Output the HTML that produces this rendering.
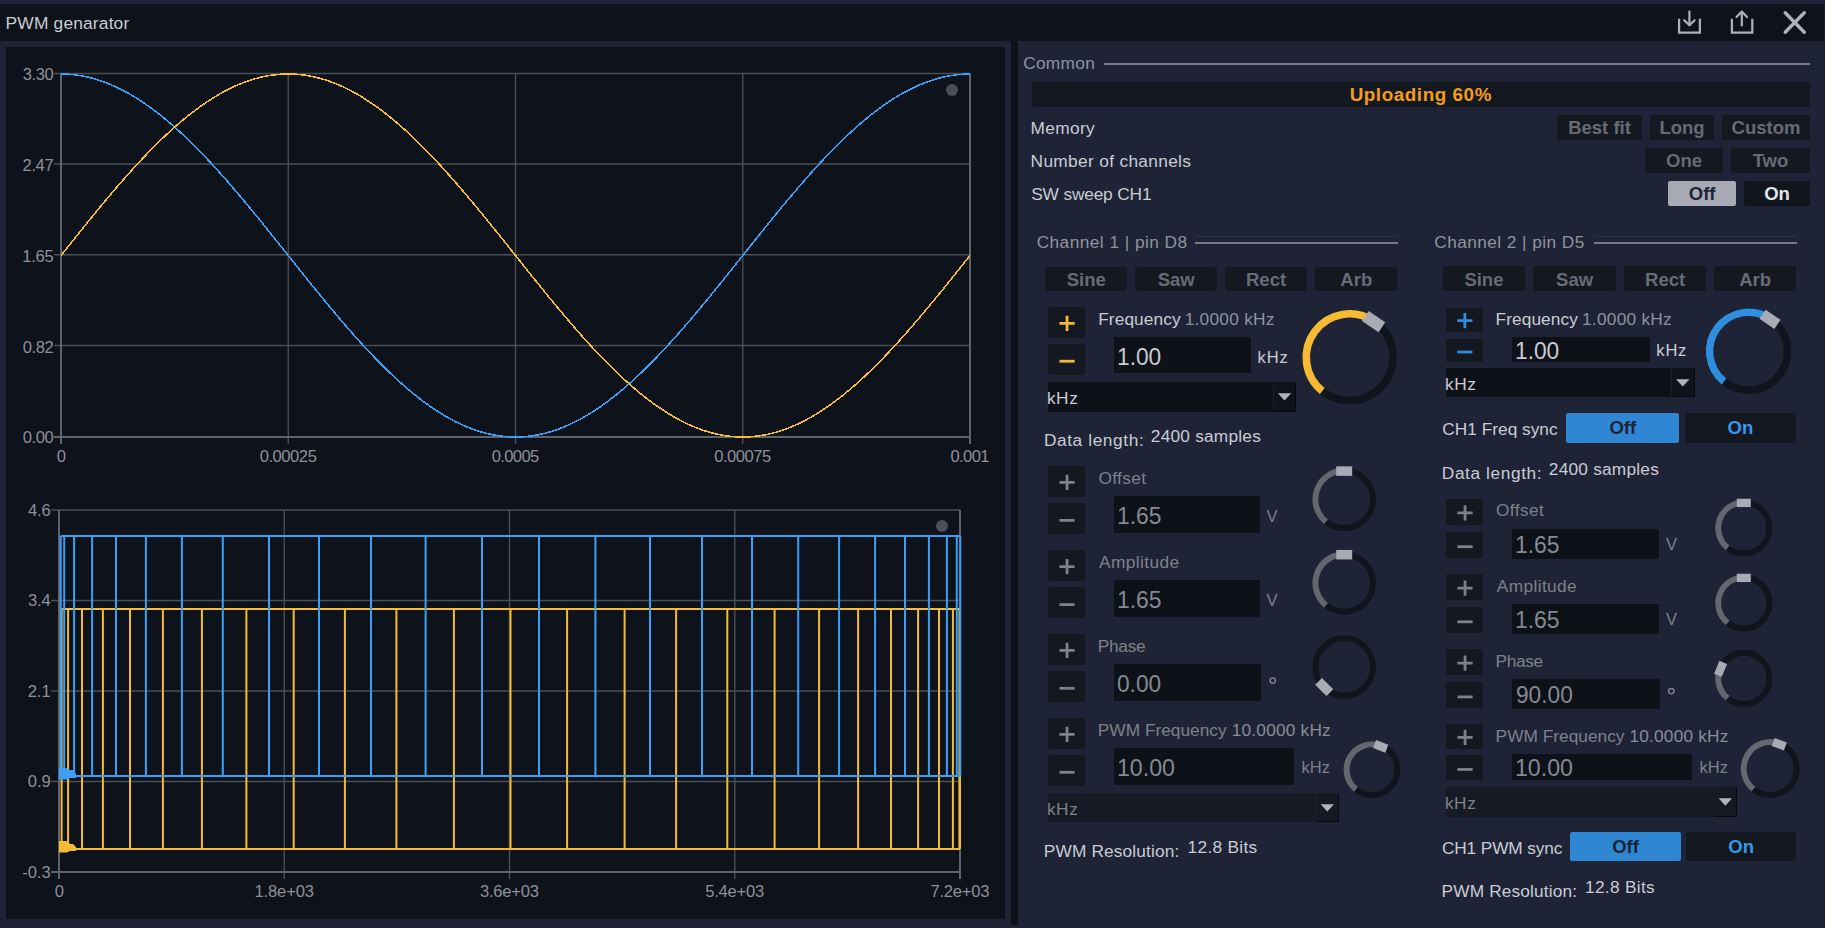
<!DOCTYPE html>
<html><head><meta charset="utf-8"><title>PWM genarator</title>
<style>
html,body{margin:0;padding:0;}
body{width:1825px;height:928px;overflow:hidden;position:relative;background:#1e2436;font-family:"Liberation Sans", sans-serif;}
</style></head><body>
<div style="position:absolute;left:0.00px;top:4.00px;width:1824.00px;height:37.00px;background:#0e121a;border-radius:0px;"></div><div style="position:absolute;left:6.00px;top:47.00px;width:999.00px;height:872.00px;background:#0e121a;border-radius:0px;"></div><div style="position:absolute;left:1011.00px;top:41.00px;width:7.00px;height:884.00px;background:#0e121a;border-radius:0px;"></div><div style="position:absolute;left:1104.00px;top:63.00px;width:706.00px;height:2.00px;background:#7a7d86;border-radius:0px;"></div><div style="position:absolute;left:1032.00px;top:82.30px;width:778.00px;height:24.40px;background:#141821;border-radius:2px;"></div><div style="position:absolute;left:1557.00px;top:115.00px;width:85.00px;height:24.50px;background:#131821;border-radius:2px;"></div><div style="position:absolute;left:1650.00px;top:115.00px;width:64.00px;height:24.50px;background:#131821;border-radius:2px;"></div><div style="position:absolute;left:1722.00px;top:115.00px;width:88.00px;height:24.50px;background:#131821;border-radius:2px;"></div><div style="position:absolute;left:1645.00px;top:148.00px;width:78.00px;height:24.60px;background:#131821;border-radius:2px;"></div><div style="position:absolute;left:1731.00px;top:148.00px;width:79.00px;height:24.60px;background:#131821;border-radius:2px;"></div><div style="position:absolute;left:1668.00px;top:180.80px;width:68.30px;height:24.90px;background:#a7aab4;border-radius:2px;"></div><div style="position:absolute;left:1744.00px;top:180.80px;width:66.00px;height:24.90px;background:#11151e;border-radius:2px;"></div><div style="position:absolute;left:1195.30px;top:242.00px;width:202.70px;height:2.00px;background:#777a83;border-radius:0px;"></div><div style="position:absolute;left:1195.30px;top:236.00px;width:202.70px;height:1.00px;background:#2b3241;border-radius:0px;"></div><div style="position:absolute;left:1045.20px;top:266.50px;width:82.20px;height:24.30px;background:#131821;border-radius:2px;"></div><div style="position:absolute;left:1135.00px;top:266.50px;width:82.30px;height:24.30px;background:#131821;border-radius:2px;"></div><div style="position:absolute;left:1225.00px;top:266.50px;width:82.10px;height:24.30px;background:#131821;border-radius:2px;"></div><div style="position:absolute;left:1315.20px;top:266.50px;width:82.20px;height:24.30px;background:#131821;border-radius:2px;"></div><div style="position:absolute;left:1048.00px;top:307.00px;width:37.30px;height:30.70px;background:#131821;border-radius:2px;"></div><div style="position:absolute;left:1048.00px;top:343.80px;width:37.30px;height:31.20px;background:#131821;border-radius:2px;"></div><div style="position:absolute;left:1113.80px;top:337.30px;width:137.00px;height:36.10px;background:#0d1118;border-radius:0px;"></div><div style="position:absolute;left:1048.00px;top:382.00px;width:248.00px;height:29.50px;background:#0d1118;border-radius:0px;"></div><div style="position:absolute;left:1273.00px;top:382.00px;width:23.00px;height:29.50px;background:#0f131b;border-radius:0px;box-shadow: inset -1px -1px 0 #07090d, inset 1px 0 0 #1a1f29;"></div><div style="position:absolute;left:1048.00px;top:466.10px;width:37.30px;height:30.70px;background:#131821;border-radius:2px;"></div><div style="position:absolute;left:1048.00px;top:503.20px;width:37.30px;height:30.80px;background:#131821;border-radius:2px;"></div><div style="position:absolute;left:1113.90px;top:496.00px;width:145.90px;height:36.80px;background:#0d1118;border-radius:0px;"></div><div style="position:absolute;left:1048.00px;top:550.30px;width:37.30px;height:30.70px;background:#131821;border-radius:2px;"></div><div style="position:absolute;left:1048.00px;top:587.40px;width:37.30px;height:30.80px;background:#131821;border-radius:2px;"></div><div style="position:absolute;left:1113.90px;top:580.20px;width:145.90px;height:36.80px;background:#0d1118;border-radius:0px;"></div><div style="position:absolute;left:1048.00px;top:634.00px;width:37.30px;height:30.70px;background:#131821;border-radius:2px;"></div><div style="position:absolute;left:1048.00px;top:671.10px;width:37.30px;height:30.80px;background:#131821;border-radius:2px;"></div><div style="position:absolute;left:1113.90px;top:663.90px;width:147.00px;height:36.80px;background:#0d1118;border-radius:0px;"></div><div style="position:absolute;left:1048.00px;top:718.00px;width:37.30px;height:30.70px;background:#131821;border-radius:2px;"></div><div style="position:absolute;left:1048.00px;top:755.10px;width:37.30px;height:30.80px;background:#131821;border-radius:2px;"></div><div style="position:absolute;left:1113.90px;top:747.90px;width:179.80px;height:36.80px;background:#0d1118;border-radius:0px;"></div><div style="position:absolute;left:1048.00px;top:793.10px;width:290.80px;height:29.40px;background:#151a24;border-radius:0px;"></div><div style="position:absolute;left:1315.80px;top:793.10px;width:23.00px;height:29.40px;background:#141923;border-radius:0px;box-shadow: inset -1px -1px 0 #07090d, inset 1px 0 0 #1a1f29;"></div><div style="position:absolute;left:1593.50px;top:242.00px;width:203.60px;height:2.00px;background:#777a83;border-radius:0px;"></div><div style="position:absolute;left:1593.50px;top:236.00px;width:203.60px;height:1.00px;background:#2b3241;border-radius:0px;"></div><div style="position:absolute;left:1443.20px;top:266.20px;width:81.50px;height:25.30px;background:#131821;border-radius:2px;"></div><div style="position:absolute;left:1533.10px;top:266.20px;width:83.00px;height:25.30px;background:#131821;border-radius:2px;"></div><div style="position:absolute;left:1624.20px;top:266.20px;width:81.80px;height:25.30px;background:#131821;border-radius:2px;"></div><div style="position:absolute;left:1714.10px;top:266.20px;width:82.10px;height:25.30px;background:#131821;border-radius:2px;"></div><div style="position:absolute;left:1446.20px;top:307.50px;width:36.50px;height:24.10px;background:#131821;border-radius:2px;"></div><div style="position:absolute;left:1446.20px;top:338.60px;width:36.50px;height:23.20px;background:#131821;border-radius:2px;"></div><div style="position:absolute;left:1512.00px;top:337.00px;width:138.00px;height:24.80px;background:#0d1118;border-radius:0px;"></div><div style="position:absolute;left:1446.20px;top:368.40px;width:248.30px;height:29.00px;background:#0d1118;border-radius:0px;"></div><div style="position:absolute;left:1671.00px;top:368.40px;width:23.50px;height:29.00px;background:#0f131b;border-radius:0px;box-shadow: inset -1px -1px 0 #07090d, inset 1px 0 0 #1a1f29;"></div><div style="position:absolute;left:1566.30px;top:413.00px;width:113.10px;height:29.60px;background:#2f86d3;border-radius:2px;"></div><div style="position:absolute;left:1684.60px;top:413.00px;width:111.60px;height:29.60px;background:#131821;border-radius:2px;"></div><div style="position:absolute;left:1446.00px;top:499.20px;width:37.30px;height:25.50px;background:#131821;border-radius:2px;"></div><div style="position:absolute;left:1446.00px;top:532.10px;width:37.30px;height:25.60px;background:#131821;border-radius:2px;"></div><div style="position:absolute;left:1512.20px;top:528.90px;width:146.50px;height:29.70px;background:#0d1118;border-radius:0px;"></div><div style="position:absolute;left:1446.00px;top:574.30px;width:37.30px;height:25.50px;background:#131821;border-radius:2px;"></div><div style="position:absolute;left:1446.00px;top:607.20px;width:37.30px;height:25.60px;background:#131821;border-radius:2px;"></div><div style="position:absolute;left:1512.20px;top:604.00px;width:146.50px;height:29.70px;background:#0d1118;border-radius:0px;"></div><div style="position:absolute;left:1446.00px;top:649.40px;width:37.30px;height:25.50px;background:#131821;border-radius:2px;"></div><div style="position:absolute;left:1446.00px;top:682.30px;width:37.30px;height:25.60px;background:#131821;border-radius:2px;"></div><div style="position:absolute;left:1512.20px;top:679.10px;width:147.70px;height:29.70px;background:#0d1118;border-radius:0px;"></div><div style="position:absolute;left:1446.00px;top:724.10px;width:37.30px;height:24.70px;background:#131821;border-radius:2px;"></div><div style="position:absolute;left:1446.00px;top:755.30px;width:37.30px;height:24.70px;background:#131821;border-radius:2px;"></div><div style="position:absolute;left:1512.10px;top:753.90px;width:179.70px;height:26.60px;background:#0d1118;border-radius:0px;"></div><div style="position:absolute;left:1446.00px;top:787.00px;width:291.10px;height:29.90px;background:#151a24;border-radius:0px;"></div><div style="position:absolute;left:1713.60px;top:787.00px;width:23.50px;height:29.90px;background:#141923;border-radius:0px;box-shadow: inset -1px -1px 0 #07090d, inset 1px 0 0 #1a1f29;"></div><div style="position:absolute;left:1570.30px;top:832.10px;width:110.40px;height:28.90px;background:#2f86d3;border-radius:2px;"></div><div style="position:absolute;left:1686.10px;top:832.10px;width:110.20px;height:28.90px;background:#131821;border-radius:2px;"></div>
<svg style="position:absolute;left:0;top:0" width="1825" height="928"><g stroke="#adb1be" stroke-width="2.2" fill="none"><path d="M1679.1 18.8 V32.7 H1699.9 V18.8"/><path d="M1731.9 18.8 V32.7 H1752.3 V18.8"/></g><g stroke="#adb1be" stroke-width="2.2" fill="none" stroke-linecap="round" stroke-linejoin="round"><path d="M1689.4 11.5 V25"/><path d="M1684.2 20.2 L1689.4 25.3 L1694.6 20.2"/><path d="M1741.8 25.5 V12"/><path d="M1736.5 17 L1741.8 11.6 L1747 17"/></g><g stroke="#adb1be" stroke-width="3.4" stroke-linecap="round"><path d="M1785.2 12.8 L1804.3 32.2 M1804.3 12.8 L1785.2 32.2"/></g><line x1="54" y1="73.5" x2="970" y2="73.5" stroke="#4a4e57" stroke-width="1.6"/><line x1="54" y1="164.0" x2="970" y2="164.0" stroke="#4a4e57" stroke-width="1.6"/><line x1="54" y1="254.75" x2="970" y2="254.75" stroke="#4a4e57" stroke-width="1.6"/><line x1="54" y1="345.5" x2="970" y2="345.5" stroke="#4a4e57" stroke-width="1.6"/><line x1="288.25" y1="74" x2="288.25" y2="444" stroke="#4a4e57" stroke-width="1.4"/><line x1="515.5" y1="74" x2="515.5" y2="444" stroke="#4a4e57" stroke-width="1.4"/><line x1="742.75" y1="74" x2="742.75" y2="444" stroke="#4a4e57" stroke-width="1.4"/><line x1="54" y1="437" x2="970" y2="437" stroke="#5f636c" stroke-width="2"/><line x1="61" y1="74" x2="61" y2="444" stroke="#5f636c" stroke-width="2"/><line x1="970" y1="74" x2="970" y2="444" stroke="#5f636c" stroke-width="2"/><polyline points="61.0,74.00 62.0,74.00 63.0,74.02 64.0,74.04 65.0,74.07 66.0,74.11 67.0,74.16 68.0,74.21 69.0,74.28 70.0,74.35 71.0,74.43 72.0,74.52 73.0,74.62 74.0,74.73 75.0,74.85 76.0,74.97 77.0,75.11 78.0,75.25 79.0,75.40 80.0,75.56 81.0,75.73 82.0,75.91 83.0,76.09 84.0,76.29 85.0,76.49 86.0,76.70 87.0,76.92 88.0,77.15 89.0,77.39 90.0,77.63 91.0,77.89 92.0,78.15 93.0,78.42 94.0,78.70 95.0,78.99 96.0,79.29 97.0,79.59 98.0,79.90 99.0,80.23 100.0,80.56 101.0,80.89 102.0,81.24 103.0,81.59 104.0,81.96 105.0,82.33 106.0,82.71 107.0,83.10 108.0,83.49 109.0,83.90 110.0,84.31 111.0,84.73 112.0,85.16 113.0,85.60 114.0,86.04 115.0,86.50 116.0,86.96 117.0,87.43 118.0,87.91 119.0,88.39 120.0,88.89 121.0,89.39 122.0,89.90 123.0,90.41 124.0,90.94 125.0,91.47 126.0,92.01 127.0,92.56 128.0,93.12 129.0,93.68 130.0,94.25 131.0,94.83 132.0,95.42 133.0,96.02 134.0,96.62 135.0,97.23 136.0,97.85 137.0,98.47 138.0,99.11 139.0,99.75 140.0,100.39 141.0,101.05 142.0,101.71 143.0,102.38 144.0,103.06 145.0,103.74 146.0,104.44 147.0,105.13 148.0,105.84 149.0,106.55 150.0,107.28 151.0,108.00 152.0,108.74 153.0,109.48 154.0,110.23 155.0,110.98 156.0,111.75 157.0,112.51 158.0,113.29 159.0,114.07 160.0,114.86 161.0,115.66 162.0,116.46 163.0,117.27 164.0,118.09 165.0,118.91 166.0,119.74 167.0,120.58 168.0,121.42 169.0,122.27 170.0,123.12 171.0,123.98 172.0,124.85 173.0,125.73 174.0,126.61 175.0,127.49 176.0,128.39 177.0,129.28 178.0,130.19 179.0,131.10 180.0,132.02 181.0,132.94 182.0,133.87 183.0,134.80 184.0,135.74 185.0,136.69 186.0,137.64 187.0,138.59 188.0,139.56 189.0,140.52 190.0,141.50 191.0,142.48 192.0,143.46 193.0,144.45 194.0,145.45 195.0,146.45 196.0,147.45 197.0,148.46 198.0,149.48 199.0,150.50 200.0,151.52 201.0,152.56 202.0,153.59 203.0,154.63 204.0,155.68 205.0,156.73 206.0,157.78 207.0,158.84 208.0,159.91 209.0,160.97 210.0,162.05 211.0,163.13 212.0,164.21 213.0,165.29 214.0,166.38 215.0,167.48 216.0,168.58 217.0,169.68 218.0,170.79 219.0,171.90 220.0,173.02 221.0,174.14 222.0,175.26 223.0,176.39 224.0,177.52 225.0,178.65 226.0,179.79 227.0,180.93 228.0,182.08 229.0,183.23 230.0,184.38 231.0,185.54 232.0,186.70 233.0,187.86 234.0,189.02 235.0,190.19 236.0,191.36 237.0,192.54 238.0,193.72 239.0,194.90 240.0,196.08 241.0,197.27 242.0,198.46 243.0,199.65 244.0,200.85 245.0,202.04 246.0,203.24 247.0,204.45 248.0,205.65 249.0,206.86 250.0,208.07 251.0,209.28 252.0,210.50 253.0,211.71 254.0,212.93 255.0,214.15 256.0,215.37 257.0,216.60 258.0,217.83 259.0,219.05 260.0,220.28 261.0,221.51 262.0,222.75 263.0,223.98 264.0,225.22 265.0,226.46 266.0,227.70 267.0,228.94 268.0,230.18 269.0,231.42 270.0,232.66 271.0,233.91 272.0,235.16 273.0,236.40 274.0,237.65 275.0,238.90 276.0,240.15 277.0,241.40 278.0,242.65 279.0,243.90 280.0,245.16 281.0,246.41 282.0,247.66 283.0,248.91 284.0,250.17 285.0,251.42 286.0,252.68 287.0,253.93 288.0,255.19 289.0,256.44 290.0,257.70 291.0,258.95 292.0,260.20 293.0,261.46 294.0,262.71 295.0,263.97 296.0,265.22 297.0,266.47 298.0,267.72 299.0,268.97 300.0,270.22 301.0,271.47 302.0,272.72 303.0,273.97 304.0,275.22 305.0,276.47 306.0,277.71 307.0,278.96 308.0,280.20 309.0,281.44 310.0,282.68 311.0,283.92 312.0,285.16 313.0,286.40 314.0,287.63 315.0,288.87 316.0,290.10 317.0,291.33 318.0,292.56 319.0,293.79 320.0,295.01 321.0,296.24 322.0,297.46 323.0,298.68 324.0,299.90 325.0,301.11 326.0,302.32 327.0,303.54 328.0,304.74 329.0,305.95 330.0,307.15 331.0,308.36 332.0,309.55 333.0,310.75 334.0,311.94 335.0,313.14 336.0,314.32 337.0,315.51 338.0,316.69 339.0,317.87 340.0,319.05 341.0,320.22 342.0,321.39 343.0,322.56 344.0,323.72 345.0,324.88 346.0,326.04 347.0,327.20 348.0,328.35 349.0,329.49 350.0,330.64 351.0,331.78 352.0,332.92 353.0,334.05 354.0,335.18 355.0,336.30 356.0,337.42 357.0,338.54 358.0,339.65 359.0,340.76 360.0,341.87 361.0,342.97 362.0,344.07 363.0,345.16 364.0,346.25 365.0,347.33 366.0,348.41 367.0,349.49 368.0,350.56 369.0,351.63 370.0,352.69 371.0,353.75 372.0,354.80 373.0,355.85 374.0,356.89 375.0,357.93 376.0,358.96 377.0,359.99 378.0,361.01 379.0,362.03 380.0,363.04 381.0,364.05 382.0,365.05 383.0,366.05 384.0,367.04 385.0,368.03 386.0,369.01 387.0,369.99 388.0,370.96 389.0,371.93 390.0,372.89 391.0,373.84 392.0,374.79 393.0,375.73 394.0,376.67 395.0,377.60 396.0,378.52 397.0,379.44 398.0,380.36 399.0,381.26 400.0,382.17 401.0,383.06 402.0,383.95 403.0,384.83 404.0,385.71 405.0,386.58 406.0,387.45 407.0,388.30 408.0,389.16 409.0,390.00 410.0,390.84 411.0,391.67 412.0,392.50 413.0,393.32 414.0,394.13 415.0,394.94 416.0,395.74 417.0,396.53 418.0,397.32 419.0,398.10 420.0,398.87 421.0,399.64 422.0,400.40 423.0,401.15 424.0,401.89 425.0,402.63 426.0,403.36 427.0,404.09 428.0,404.80 429.0,405.51 430.0,406.22 431.0,406.91 432.0,407.60 433.0,408.28 434.0,408.95 435.0,409.62 436.0,410.28 437.0,410.93 438.0,411.57 439.0,412.21 440.0,412.84 441.0,413.46 442.0,414.08 443.0,414.68 444.0,415.28 445.0,415.87 446.0,416.46 447.0,417.03 448.0,417.60 449.0,418.16 450.0,418.71 451.0,419.26 452.0,419.80 453.0,420.32 454.0,420.85 455.0,421.36 456.0,421.87 457.0,422.36 458.0,422.85 459.0,423.33 460.0,423.81 461.0,424.27 462.0,424.73 463.0,425.18 464.0,425.62 465.0,426.05 466.0,426.48 467.0,426.90 468.0,427.30 469.0,427.71 470.0,428.10 471.0,428.48 472.0,428.86 473.0,429.22 474.0,429.58 475.0,429.93 476.0,430.28 477.0,430.61 478.0,430.94 479.0,431.25 480.0,431.56 481.0,431.86 482.0,432.16 483.0,432.44 484.0,432.71 485.0,432.98 486.0,433.24 487.0,433.49 488.0,433.73 489.0,433.96 490.0,434.19 491.0,434.40 492.0,434.61 493.0,434.81 494.0,435.00 495.0,435.18 496.0,435.35 497.0,435.52 498.0,435.67 499.0,435.82 500.0,435.96 501.0,436.09 502.0,436.21 503.0,436.32 504.0,436.43 505.0,436.52 506.0,436.61 507.0,436.69 508.0,436.76 509.0,436.82 510.0,436.87 511.0,436.91 512.0,436.95 513.0,436.97 514.0,436.99 515.0,437.00 516.0,437.00 517.0,436.99 518.0,436.97 519.0,436.95 520.0,436.91 521.0,436.87 522.0,436.82 523.0,436.76 524.0,436.69 525.0,436.61 526.0,436.52 527.0,436.43 528.0,436.32 529.0,436.21 530.0,436.09 531.0,435.96 532.0,435.82 533.0,435.67 534.0,435.52 535.0,435.35 536.0,435.18 537.0,435.00 538.0,434.81 539.0,434.61 540.0,434.40 541.0,434.19 542.0,433.96 543.0,433.73 544.0,433.49 545.0,433.24 546.0,432.98 547.0,432.71 548.0,432.44 549.0,432.16 550.0,431.86 551.0,431.56 552.0,431.25 553.0,430.94 554.0,430.61 555.0,430.28 556.0,429.93 557.0,429.58 558.0,429.22 559.0,428.86 560.0,428.48 561.0,428.10 562.0,427.71 563.0,427.30 564.0,426.90 565.0,426.48 566.0,426.05 567.0,425.62 568.0,425.18 569.0,424.73 570.0,424.27 571.0,423.81 572.0,423.33 573.0,422.85 574.0,422.36 575.0,421.87 576.0,421.36 577.0,420.85 578.0,420.32 579.0,419.80 580.0,419.26 581.0,418.71 582.0,418.16 583.0,417.60 584.0,417.03 585.0,416.46 586.0,415.87 587.0,415.28 588.0,414.68 589.0,414.08 590.0,413.46 591.0,412.84 592.0,412.21 593.0,411.57 594.0,410.93 595.0,410.28 596.0,409.62 597.0,408.95 598.0,408.28 599.0,407.60 600.0,406.91 601.0,406.22 602.0,405.51 603.0,404.80 604.0,404.09 605.0,403.36 606.0,402.63 607.0,401.89 608.0,401.15 609.0,400.40 610.0,399.64 611.0,398.87 612.0,398.10 613.0,397.32 614.0,396.53 615.0,395.74 616.0,394.94 617.0,394.13 618.0,393.32 619.0,392.50 620.0,391.67 621.0,390.84 622.0,390.00 623.0,389.16 624.0,388.30 625.0,387.45 626.0,386.58 627.0,385.71 628.0,384.83 629.0,383.95 630.0,383.06 631.0,382.17 632.0,381.26 633.0,380.36 634.0,379.44 635.0,378.52 636.0,377.60 637.0,376.67 638.0,375.73 639.0,374.79 640.0,373.84 641.0,372.89 642.0,371.93 643.0,370.96 644.0,369.99 645.0,369.01 646.0,368.03 647.0,367.04 648.0,366.05 649.0,365.05 650.0,364.05 651.0,363.04 652.0,362.03 653.0,361.01 654.0,359.99 655.0,358.96 656.0,357.93 657.0,356.89 658.0,355.85 659.0,354.80 660.0,353.75 661.0,352.69 662.0,351.63 663.0,350.56 664.0,349.49 665.0,348.41 666.0,347.33 667.0,346.25 668.0,345.16 669.0,344.07 670.0,342.97 671.0,341.87 672.0,340.76 673.0,339.65 674.0,338.54 675.0,337.42 676.0,336.30 677.0,335.18 678.0,334.05 679.0,332.92 680.0,331.78 681.0,330.64 682.0,329.49 683.0,328.35 684.0,327.20 685.0,326.04 686.0,324.88 687.0,323.72 688.0,322.56 689.0,321.39 690.0,320.22 691.0,319.05 692.0,317.87 693.0,316.69 694.0,315.51 695.0,314.32 696.0,313.14 697.0,311.94 698.0,310.75 699.0,309.55 700.0,308.36 701.0,307.15 702.0,305.95 703.0,304.74 704.0,303.54 705.0,302.32 706.0,301.11 707.0,299.90 708.0,298.68 709.0,297.46 710.0,296.24 711.0,295.01 712.0,293.79 713.0,292.56 714.0,291.33 715.0,290.10 716.0,288.87 717.0,287.63 718.0,286.40 719.0,285.16 720.0,283.92 721.0,282.68 722.0,281.44 723.0,280.20 724.0,278.96 725.0,277.71 726.0,276.47 727.0,275.22 728.0,273.97 729.0,272.72 730.0,271.47 731.0,270.22 732.0,268.97 733.0,267.72 734.0,266.47 735.0,265.22 736.0,263.97 737.0,262.71 738.0,261.46 739.0,260.20 740.0,258.95 741.0,257.70 742.0,256.44 743.0,255.19 744.0,253.93 745.0,252.68 746.0,251.42 747.0,250.17 748.0,248.91 749.0,247.66 750.0,246.41 751.0,245.16 752.0,243.90 753.0,242.65 754.0,241.40 755.0,240.15 756.0,238.90 757.0,237.65 758.0,236.40 759.0,235.16 760.0,233.91 761.0,232.66 762.0,231.42 763.0,230.18 764.0,228.94 765.0,227.70 766.0,226.46 767.0,225.22 768.0,223.98 769.0,222.75 770.0,221.51 771.0,220.28 772.0,219.05 773.0,217.83 774.0,216.60 775.0,215.37 776.0,214.15 777.0,212.93 778.0,211.71 779.0,210.50 780.0,209.28 781.0,208.07 782.0,206.86 783.0,205.65 784.0,204.45 785.0,203.24 786.0,202.04 787.0,200.85 788.0,199.65 789.0,198.46 790.0,197.27 791.0,196.08 792.0,194.90 793.0,193.72 794.0,192.54 795.0,191.36 796.0,190.19 797.0,189.02 798.0,187.86 799.0,186.70 800.0,185.54 801.0,184.38 802.0,183.23 803.0,182.08 804.0,180.93 805.0,179.79 806.0,178.65 807.0,177.52 808.0,176.39 809.0,175.26 810.0,174.14 811.0,173.02 812.0,171.90 813.0,170.79 814.0,169.68 815.0,168.58 816.0,167.48 817.0,166.38 818.0,165.29 819.0,164.21 820.0,163.13 821.0,162.05 822.0,160.97 823.0,159.91 824.0,158.84 825.0,157.78 826.0,156.73 827.0,155.68 828.0,154.63 829.0,153.59 830.0,152.56 831.0,151.52 832.0,150.50 833.0,149.48 834.0,148.46 835.0,147.45 836.0,146.45 837.0,145.45 838.0,144.45 839.0,143.46 840.0,142.48 841.0,141.50 842.0,140.52 843.0,139.56 844.0,138.59 845.0,137.64 846.0,136.69 847.0,135.74 848.0,134.80 849.0,133.87 850.0,132.94 851.0,132.02 852.0,131.10 853.0,130.19 854.0,129.28 855.0,128.39 856.0,127.49 857.0,126.61 858.0,125.73 859.0,124.85 860.0,123.98 861.0,123.12 862.0,122.27 863.0,121.42 864.0,120.58 865.0,119.74 866.0,118.91 867.0,118.09 868.0,117.27 869.0,116.46 870.0,115.66 871.0,114.86 872.0,114.07 873.0,113.29 874.0,112.51 875.0,111.75 876.0,110.98 877.0,110.23 878.0,109.48 879.0,108.74 880.0,108.00 881.0,107.28 882.0,106.55 883.0,105.84 884.0,105.13 885.0,104.44 886.0,103.74 887.0,103.06 888.0,102.38 889.0,101.71 890.0,101.05 891.0,100.39 892.0,99.75 893.0,99.11 894.0,98.47 895.0,97.85 896.0,97.23 897.0,96.62 898.0,96.02 899.0,95.42 900.0,94.83 901.0,94.25 902.0,93.68 903.0,93.12 904.0,92.56 905.0,92.01 906.0,91.47 907.0,90.94 908.0,90.41 909.0,89.90 910.0,89.39 911.0,88.89 912.0,88.39 913.0,87.91 914.0,87.43 915.0,86.96 916.0,86.50 917.0,86.04 918.0,85.60 919.0,85.16 920.0,84.73 921.0,84.31 922.0,83.90 923.0,83.49 924.0,83.10 925.0,82.71 926.0,82.33 927.0,81.96 928.0,81.59 929.0,81.24 930.0,80.89 931.0,80.56 932.0,80.23 933.0,79.90 934.0,79.59 935.0,79.29 936.0,78.99 937.0,78.70 938.0,78.42 939.0,78.15 940.0,77.89 941.0,77.63 942.0,77.39 943.0,77.15 944.0,76.92 945.0,76.70 946.0,76.49 947.0,76.29 948.0,76.09 949.0,75.91 950.0,75.73 951.0,75.56 952.0,75.40 953.0,75.25 954.0,75.11 955.0,74.97 956.0,74.85 957.0,74.73 958.0,74.62 959.0,74.52 960.0,74.43 961.0,74.35 962.0,74.28 963.0,74.21 964.0,74.16 965.0,74.11 966.0,74.07 967.0,74.04 968.0,74.02 969.0,74.00 970.0,74.00" fill="none" stroke="#3aa0f5" stroke-width="1.6" shape-rendering="crispEdges"/><polyline points="61.0,255.50 62.0,254.25 63.0,252.99 64.0,251.74 65.0,250.48 66.0,249.23 67.0,247.97 68.0,246.72 69.0,245.47 70.0,244.22 71.0,242.96 72.0,241.71 73.0,240.46 74.0,239.21 75.0,237.96 76.0,236.72 77.0,235.47 78.0,234.22 79.0,232.98 80.0,231.73 81.0,230.49 82.0,229.25 83.0,228.01 84.0,226.77 85.0,225.53 86.0,224.29 87.0,223.06 88.0,221.82 89.0,220.59 90.0,219.36 91.0,218.13 92.0,216.91 93.0,215.68 94.0,214.46 95.0,213.24 96.0,212.02 97.0,210.80 98.0,209.59 99.0,208.37 100.0,207.16 101.0,205.95 102.0,204.75 103.0,203.55 104.0,202.34 105.0,201.15 106.0,199.95 107.0,198.76 108.0,197.57 109.0,196.38 110.0,195.20 111.0,194.01 112.0,192.83 113.0,191.66 114.0,190.49 115.0,189.32 116.0,188.15 117.0,186.99 118.0,185.83 119.0,184.67 120.0,183.52 121.0,182.37 122.0,181.22 123.0,180.08 124.0,178.94 125.0,177.80 126.0,176.67 127.0,175.54 128.0,174.42 129.0,173.30 130.0,172.18 131.0,171.07 132.0,169.96 133.0,168.85 134.0,167.75 135.0,166.66 136.0,165.57 137.0,164.48 138.0,163.40 139.0,162.32 140.0,161.24 141.0,160.17 142.0,159.11 143.0,158.05 144.0,156.99 145.0,155.94 146.0,154.89 147.0,153.85 148.0,152.81 149.0,151.78 150.0,150.75 151.0,149.73 152.0,148.72 153.0,147.70 154.0,146.70 155.0,145.70 156.0,144.70 157.0,143.71 158.0,142.72 159.0,141.74 160.0,140.77 161.0,139.80 162.0,138.83 163.0,137.88 164.0,136.92 165.0,135.98 166.0,135.03 167.0,134.10 168.0,133.17 169.0,132.25 170.0,131.33 171.0,130.42 172.0,129.51 173.0,128.61 174.0,127.72 175.0,126.83 176.0,125.95 177.0,125.07 178.0,124.20 179.0,123.34 180.0,122.48 181.0,121.63 182.0,120.79 183.0,119.95 184.0,119.12 185.0,118.29 186.0,117.48 187.0,116.66 188.0,115.86 189.0,115.06 190.0,114.27 191.0,113.49 192.0,112.71 193.0,111.94 194.0,111.17 195.0,110.42 196.0,109.67 197.0,108.92 198.0,108.19 199.0,107.46 200.0,106.73 201.0,106.02 202.0,105.31 203.0,104.61 204.0,103.92 205.0,103.23 206.0,102.55 207.0,101.88 208.0,101.21 209.0,100.56 210.0,99.91 211.0,99.27 212.0,98.63 213.0,98.00 214.0,97.38 215.0,96.77 216.0,96.17 217.0,95.57 218.0,94.98 219.0,94.40 220.0,93.83 221.0,93.26 222.0,92.70 223.0,92.15 224.0,91.61 225.0,91.07 226.0,90.54 227.0,90.02 228.0,89.51 229.0,89.01 230.0,88.51 231.0,88.03 232.0,87.55 233.0,87.08 234.0,86.61 235.0,86.16 236.0,85.71 237.0,85.27 238.0,84.84 239.0,84.42 240.0,84.00 241.0,83.59 242.0,83.20 243.0,82.81 244.0,82.42 245.0,82.05 246.0,81.68 247.0,81.33 248.0,80.98 249.0,80.64 250.0,80.31 251.0,79.98 252.0,79.67 253.0,79.36 254.0,79.06 255.0,78.77 256.0,78.49 257.0,78.22 258.0,77.95 259.0,77.70 260.0,77.45 261.0,77.21 262.0,76.98 263.0,76.76 264.0,76.54 265.0,76.34 266.0,76.14 267.0,75.95 268.0,75.78 269.0,75.60 270.0,75.44 271.0,75.29 272.0,75.14 273.0,75.01 274.0,74.88 275.0,74.76 276.0,74.65 277.0,74.55 278.0,74.46 279.0,74.37 280.0,74.30 281.0,74.23 282.0,74.17 283.0,74.12 284.0,74.08 285.0,74.05 286.0,74.02 287.0,74.01 288.0,74.00 289.0,74.00 290.0,74.01 291.0,74.03 292.0,74.06 293.0,74.10 294.0,74.14 295.0,74.20 296.0,74.26 297.0,74.33 298.0,74.41 299.0,74.50 300.0,74.60 301.0,74.70 302.0,74.82 303.0,74.94 304.0,75.07 305.0,75.22 306.0,75.36 307.0,75.52 308.0,75.69 309.0,75.86 310.0,76.05 311.0,76.24 312.0,76.44 313.0,76.65 314.0,76.87 315.0,77.09 316.0,77.33 317.0,77.57 318.0,77.82 319.0,78.08 320.0,78.35 321.0,78.63 322.0,78.92 323.0,79.21 324.0,79.51 325.0,79.82 326.0,80.14 327.0,80.47 328.0,80.81 329.0,81.15 330.0,81.51 331.0,81.87 332.0,82.24 333.0,82.61 334.0,83.00 335.0,83.39 336.0,83.80 337.0,84.21 338.0,84.63 339.0,85.05 340.0,85.49 341.0,85.93 342.0,86.38 343.0,86.84 344.0,87.31 345.0,87.79 346.0,88.27 347.0,88.76 348.0,89.26 349.0,89.77 350.0,90.28 351.0,90.81 352.0,91.34 353.0,91.88 354.0,92.42 355.0,92.98 356.0,93.54 357.0,94.11 358.0,94.69 359.0,95.27 360.0,95.87 361.0,96.47 362.0,97.08 363.0,97.69 364.0,98.32 365.0,98.95 366.0,99.59 367.0,100.23 368.0,100.89 369.0,101.55 370.0,102.21 371.0,102.89 372.0,103.57 373.0,104.26 374.0,104.96 375.0,105.66 376.0,106.38 377.0,107.09 378.0,107.82 379.0,108.55 380.0,109.29 381.0,110.04 382.0,110.79 383.0,111.55 384.0,112.32 385.0,113.10 386.0,113.88 387.0,114.67 388.0,115.46 389.0,116.26 390.0,117.07 391.0,117.88 392.0,118.71 393.0,119.53 394.0,120.37 395.0,121.21 396.0,122.06 397.0,122.91 398.0,123.77 399.0,124.64 400.0,125.51 401.0,126.39 402.0,127.27 403.0,128.16 404.0,129.06 405.0,129.96 406.0,130.87 407.0,131.79 408.0,132.71 409.0,133.63 410.0,134.57 411.0,135.50 412.0,136.45 413.0,137.40 414.0,138.35 415.0,139.32 416.0,140.28 417.0,141.25 418.0,142.23 419.0,143.21 420.0,144.20 421.0,145.20 422.0,146.20 423.0,147.20 424.0,148.21 425.0,149.22 426.0,150.24 427.0,151.27 428.0,152.30 429.0,153.33 430.0,154.37 431.0,155.41 432.0,156.46 433.0,157.52 434.0,158.58 435.0,159.64 436.0,160.71 437.0,161.78 438.0,162.86 439.0,163.94 440.0,165.02 441.0,166.11 442.0,167.21 443.0,168.30 444.0,169.41 445.0,170.51 446.0,171.62 447.0,172.74 448.0,173.86 449.0,174.98 450.0,176.10 451.0,177.23 452.0,178.37 453.0,179.51 454.0,180.65 455.0,181.79 456.0,182.94 457.0,184.09 458.0,185.25 459.0,186.41 460.0,187.57 461.0,188.73 462.0,189.90 463.0,191.07 464.0,192.25 465.0,193.42 466.0,194.60 467.0,195.79 468.0,196.97 469.0,198.16 470.0,199.35 471.0,200.55 472.0,201.75 473.0,202.94 474.0,204.15 475.0,205.35 476.0,206.56 477.0,207.77 478.0,208.98 479.0,210.19 480.0,211.41 481.0,212.63 482.0,213.85 483.0,215.07 484.0,216.29 485.0,217.52 486.0,218.75 487.0,219.98 488.0,221.21 489.0,222.44 490.0,223.67 491.0,224.91 492.0,226.15 493.0,227.39 494.0,228.63 495.0,229.87 496.0,231.11 497.0,232.35 498.0,233.60 499.0,234.84 500.0,236.09 501.0,237.34 502.0,238.59 503.0,239.84 504.0,241.09 505.0,242.34 506.0,243.59 507.0,244.84 508.0,246.09 509.0,247.35 510.0,248.60 511.0,249.86 512.0,251.11 513.0,252.36 514.0,253.62 515.0,254.87 516.0,256.13 517.0,257.38 518.0,258.64 519.0,259.89 520.0,261.14 521.0,262.40 522.0,263.65 523.0,264.91 524.0,266.16 525.0,267.41 526.0,268.66 527.0,269.91 528.0,271.16 529.0,272.41 530.0,273.66 531.0,274.91 532.0,276.16 533.0,277.40 534.0,278.65 535.0,279.89 536.0,281.13 537.0,282.37 538.0,283.61 539.0,284.85 540.0,286.09 541.0,287.33 542.0,288.56 543.0,289.79 544.0,291.02 545.0,292.25 546.0,293.48 547.0,294.71 548.0,295.93 549.0,297.15 550.0,298.37 551.0,299.59 552.0,300.81 553.0,302.02 554.0,303.23 555.0,304.44 556.0,305.65 557.0,306.85 558.0,308.06 559.0,309.25 560.0,310.45 561.0,311.65 562.0,312.84 563.0,314.03 564.0,315.21 565.0,316.40 566.0,317.58 567.0,318.75 568.0,319.93 569.0,321.10 570.0,322.27 571.0,323.43 572.0,324.59 573.0,325.75 574.0,326.91 575.0,328.06 576.0,329.21 577.0,330.35 578.0,331.49 579.0,332.63 580.0,333.77 581.0,334.90 582.0,336.02 583.0,337.14 584.0,338.26 585.0,339.38 586.0,340.49 587.0,341.59 588.0,342.70 589.0,343.79 590.0,344.89 591.0,345.98 592.0,347.06 593.0,348.14 594.0,349.22 595.0,350.29 596.0,351.36 597.0,352.42 598.0,353.48 599.0,354.54 600.0,355.59 601.0,356.63 602.0,357.67 603.0,358.70 604.0,359.73 605.0,360.76 606.0,361.78 607.0,362.79 608.0,363.80 609.0,364.80 610.0,365.80 611.0,366.80 612.0,367.79 613.0,368.77 614.0,369.75 615.0,370.72 616.0,371.68 617.0,372.65 618.0,373.60 619.0,374.55 620.0,375.50 621.0,376.43 622.0,377.37 623.0,378.29 624.0,379.21 625.0,380.13 626.0,381.04 627.0,381.94 628.0,382.84 629.0,383.73 630.0,384.61 631.0,385.49 632.0,386.36 633.0,387.23 634.0,388.09 635.0,388.94 636.0,389.79 637.0,390.63 638.0,391.47 639.0,392.29 640.0,393.12 641.0,393.93 642.0,394.74 643.0,395.54 644.0,396.33 645.0,397.12 646.0,397.90 647.0,398.68 648.0,399.45 649.0,400.21 650.0,400.96 651.0,401.71 652.0,402.45 653.0,403.18 654.0,403.91 655.0,404.62 656.0,405.34 657.0,406.04 658.0,406.74 659.0,407.43 660.0,408.11 661.0,408.79 662.0,409.45 663.0,410.11 664.0,410.77 665.0,411.41 666.0,412.05 667.0,412.68 668.0,413.31 669.0,413.92 670.0,414.53 671.0,415.13 672.0,415.73 673.0,416.31 674.0,416.89 675.0,417.46 676.0,418.02 677.0,418.58 678.0,419.12 679.0,419.66 680.0,420.19 681.0,420.72 682.0,421.23 683.0,421.74 684.0,422.24 685.0,422.73 686.0,423.21 687.0,423.69 688.0,424.16 689.0,424.62 690.0,425.07 691.0,425.51 692.0,425.95 693.0,426.37 694.0,426.79 695.0,427.20 696.0,427.61 697.0,428.00 698.0,428.39 699.0,428.76 700.0,429.13 701.0,429.49 702.0,429.85 703.0,430.19 704.0,430.53 705.0,430.86 706.0,431.18 707.0,431.49 708.0,431.79 709.0,432.08 710.0,432.37 711.0,432.65 712.0,432.92 713.0,433.18 714.0,433.43 715.0,433.67 716.0,433.91 717.0,434.13 718.0,434.35 719.0,434.56 720.0,434.76 721.0,434.95 722.0,435.14 723.0,435.31 724.0,435.48 725.0,435.64 726.0,435.78 727.0,435.93 728.0,436.06 729.0,436.18 730.0,436.30 731.0,436.40 732.0,436.50 733.0,436.59 734.0,436.67 735.0,436.74 736.0,436.80 737.0,436.86 738.0,436.90 739.0,436.94 740.0,436.97 741.0,436.99 742.0,437.00 743.0,437.00 744.0,436.99 745.0,436.98 746.0,436.95 747.0,436.92 748.0,436.88 749.0,436.83 750.0,436.77 751.0,436.70 752.0,436.63 753.0,436.54 754.0,436.45 755.0,436.35 756.0,436.24 757.0,436.12 758.0,435.99 759.0,435.86 760.0,435.71 761.0,435.56 762.0,435.40 763.0,435.22 764.0,435.05 765.0,434.86 766.0,434.66 767.0,434.46 768.0,434.24 769.0,434.02 770.0,433.79 771.0,433.55 772.0,433.30 773.0,433.05 774.0,432.78 775.0,432.51 776.0,432.23 777.0,431.94 778.0,431.64 779.0,431.33 780.0,431.02 781.0,430.69 782.0,430.36 783.0,430.02 784.0,429.67 785.0,429.32 786.0,428.95 787.0,428.58 788.0,428.19 789.0,427.80 790.0,427.41 791.0,427.00 792.0,426.58 793.0,426.16 794.0,425.73 795.0,425.29 796.0,424.84 797.0,424.39 798.0,423.92 799.0,423.45 800.0,422.97 801.0,422.49 802.0,421.99 803.0,421.49 804.0,420.98 805.0,420.46 806.0,419.93 807.0,419.39 808.0,418.85 809.0,418.30 810.0,417.74 811.0,417.17 812.0,416.60 813.0,416.02 814.0,415.43 815.0,414.83 816.0,414.23 817.0,413.62 818.0,413.00 819.0,412.37 820.0,411.73 821.0,411.09 822.0,410.44 823.0,409.79 824.0,409.12 825.0,408.45 826.0,407.77 827.0,407.08 828.0,406.39 829.0,405.69 830.0,404.98 831.0,404.27 832.0,403.54 833.0,402.81 834.0,402.08 835.0,401.33 836.0,400.58 837.0,399.83 838.0,399.06 839.0,398.29 840.0,397.51 841.0,396.73 842.0,395.94 843.0,395.14 844.0,394.34 845.0,393.52 846.0,392.71 847.0,391.88 848.0,391.05 849.0,390.21 850.0,389.37 851.0,388.52 852.0,387.66 853.0,386.80 854.0,385.93 855.0,385.05 856.0,384.17 857.0,383.28 858.0,382.39 859.0,381.49 860.0,380.58 861.0,379.67 862.0,378.75 863.0,377.83 864.0,376.90 865.0,375.97 866.0,375.02 867.0,374.08 868.0,373.12 869.0,372.17 870.0,371.20 871.0,370.23 872.0,369.26 873.0,368.28 874.0,367.29 875.0,366.30 876.0,365.30 877.0,364.30 878.0,363.30 879.0,362.28 880.0,361.27 881.0,360.25 882.0,359.22 883.0,358.19 884.0,357.15 885.0,356.11 886.0,355.06 887.0,354.01 888.0,352.95 889.0,351.89 890.0,350.83 891.0,349.76 892.0,348.68 893.0,347.60 894.0,346.52 895.0,345.43 896.0,344.34 897.0,343.25 898.0,342.15 899.0,341.04 900.0,339.93 901.0,338.82 902.0,337.70 903.0,336.58 904.0,335.46 905.0,334.33 906.0,333.20 907.0,332.06 908.0,330.92 909.0,329.78 910.0,328.63 911.0,327.48 912.0,326.33 913.0,325.17 914.0,324.01 915.0,322.85 916.0,321.68 917.0,320.51 918.0,319.34 919.0,318.17 920.0,316.99 921.0,315.80 922.0,314.62 923.0,313.43 924.0,312.24 925.0,311.05 926.0,309.85 927.0,308.66 928.0,307.45 929.0,306.25 930.0,305.05 931.0,303.84 932.0,302.63 933.0,301.41 934.0,300.20 935.0,298.98 936.0,297.76 937.0,296.54 938.0,295.32 939.0,294.09 940.0,292.87 941.0,291.64 942.0,290.41 943.0,289.18 944.0,287.94 945.0,286.71 946.0,285.47 947.0,284.23 948.0,282.99 949.0,281.75 950.0,280.51 951.0,279.27 952.0,278.02 953.0,276.78 954.0,275.53 955.0,274.28 956.0,273.04 957.0,271.79 958.0,270.54 959.0,269.29 960.0,268.04 961.0,266.78 962.0,265.53 963.0,264.28 964.0,263.03 965.0,261.77 966.0,260.52 967.0,259.26 968.0,258.01 969.0,256.75 970.0,255.50" fill="none" stroke="#f6bb33" stroke-width="1.6" shape-rendering="crispEdges"/><circle cx="952" cy="90" r="6" fill="#4b4f58"/><line x1="51" y1="510.0" x2="960" y2="510.0" stroke="#4a4e57" stroke-width="1.6"/><line x1="51" y1="600.5" x2="960" y2="600.5" stroke="#4a4e57" stroke-width="1.6"/><line x1="51" y1="691.0" x2="960" y2="691.0" stroke="#4a4e57" stroke-width="1.6"/><line x1="51" y1="781.5" x2="960" y2="781.5" stroke="#4a4e57" stroke-width="1.6"/><line x1="284.25" y1="510" x2="284.25" y2="879" stroke="#4a4e57" stroke-width="1.4"/><line x1="509.5" y1="510" x2="509.5" y2="879" stroke="#4a4e57" stroke-width="1.4"/><line x1="734.75" y1="510" x2="734.75" y2="879" stroke="#4a4e57" stroke-width="1.4"/><line x1="51" y1="872" x2="960" y2="872" stroke="#5f636c" stroke-width="2"/><line x1="59" y1="510" x2="59" y2="879" stroke="#5f636c" stroke-width="2"/><line x1="960" y1="510" x2="960" y2="879" stroke="#5f636c" stroke-width="2"/><path d="M59 841 H67 L70 844 H73 L76 847 V851 H70 L67 852.5 H59 Z" fill="#f6bb33"/><path d="M61.6 609 H960.0 M61.6 849 H960.0 M61.6 609 V849 M68.1 609 V849 M82.0 609 V849 M102.9 609 V849 M130.0 609 V849 M162.9 609 V849 M201.9 609 V849 M246.4 609 V849 M293.7 609 V849 M344.9 609 V849 M396.4 609 V849 M453.9 609 V849 M510.5 609 V849 M567.1 609 V849 M624.6 609 V849 M676.1 609 V849 M727.3 609 V849 M774.6 609 V849 M819.1 609 V849 M858.1 609 V849 M891.0 609 V849 M918.1 609 V849 M939.0 609 V849 M952.9 609 V849 M959.4 609 V849 M960.0 609 V849 " stroke="#f6bb33" stroke-width="2" fill="none"/><path d="M60.7 536 H960.3 M60.7 776 H960.3 M60.7 536 V776 M64.2 536 V776 M74.1 536 V776 M92.1 536 V776 M116.0 536 V776 M145.9 536 V776 M181.9 536 V776 M222.8 536 V776 M269.0 536 V776 M319.0 536 V776 M371.0 536 V776 M425.6 536 V776 M482.0 536 V776 M539.0 536 V776 M595.4 536 V776 M650.0 536 V776 M702.0 536 V776 M752.0 536 V776 M798.2 536 V776 M839.1 536 V776 M875.1 536 V776 M905.0 536 V776 M928.9 536 V776 M946.9 536 V776 M956.8 536 V776 M960.3 536 V776 " stroke="#3aa0f5" stroke-width="2" fill="none"/><path d="M59 768 H66 L70 770 H73 L76 774 V778 H70 L67 779.5 H59 Z" fill="#3aa0f5"/><circle cx="942" cy="526" r="6" fill="#4b4f58"/><path d="M1059.4500000000003 323.35 H1074.65 M1067.0500000000002 315.75 V330.95000000000005" stroke="#f6bb33" stroke-width="2.8"/><path d="M1059.4500000000003 361.2 H1074.65" stroke="#f6bb33" stroke-width="2.8"/><path d="M1277.8 393.15 H1291.2 L1284.5 400.45 Z" fill="#b0b3bc"/><circle cx="1349.6" cy="357.2" r="43.400000000000006" fill="none" stroke="#10141c" stroke-width="7.6"/><path d="M1322.29 390.93 A43.400000000000006 43.400000000000006 0 0 1 1373.88 321.23" fill="none" stroke="#f6bb33" stroke-width="7.6"/><rect x="1339.60" y="308.30" width="20" height="12" fill="#a8abb4" transform="rotate(34.02 1349.6 357.2)"/><path d="M1059.4500000000003 482.45000000000005 H1074.65 M1067.0500000000002 474.85 V490.05000000000007" stroke="#7d8189" stroke-width="2.8"/><path d="M1059.4500000000003 520.4 H1074.65" stroke="#7d8189" stroke-width="2.8"/><circle cx="1344.2" cy="499.4" r="28.8" fill="none" stroke="#10141c" stroke-width="6"/><path d="M1326.08 521.78 A28.8 28.8 0 0 1 1344.20 470.60" fill="none" stroke="#63676f" stroke-width="6"/><rect x="1336.20" y="466.35" width="16" height="9.5" fill="#a8abb4" transform="rotate(0.00 1344.2 499.4)"/><path d="M1059.4500000000003 566.65 H1074.65 M1067.0500000000002 559.05 V574.25" stroke="#7d8189" stroke-width="2.8"/><path d="M1059.4500000000003 604.5999999999999 H1074.65" stroke="#7d8189" stroke-width="2.8"/><circle cx="1344.2" cy="583.0" r="28.8" fill="none" stroke="#10141c" stroke-width="6"/><path d="M1326.08 605.38 A28.8 28.8 0 0 1 1344.20 554.20" fill="none" stroke="#63676f" stroke-width="6"/><rect x="1336.20" y="549.95" width="16" height="9.5" fill="#a8abb4" transform="rotate(0.00 1344.2 583.0)"/><path d="M1059.4500000000003 650.35 H1074.65 M1067.0500000000002 642.75 V657.95" stroke="#7d8189" stroke-width="2.8"/><path d="M1059.4500000000003 688.3 H1074.65" stroke="#7d8189" stroke-width="2.8"/><circle cx="1272.8" cy="680.6" r="2.7" fill="none" stroke="#7d8189" stroke-width="1.5"/><circle cx="1344.2" cy="667" r="28.8" fill="none" stroke="#10141c" stroke-width="6"/><rect x="1336.20" y="633.95" width="16" height="9.5" fill="#a8abb4" transform="rotate(-135.00 1344.2 667)"/><path d="M1059.4500000000003 734.35 H1074.65 M1067.0500000000002 726.75 V741.95" stroke="#7d8189" stroke-width="2.8"/><path d="M1059.4500000000003 772.3 H1074.65" stroke="#7d8189" stroke-width="2.8"/><circle cx="1372" cy="769.7" r="25.4" fill="none" stroke="#10141c" stroke-width="6"/><path d="M1356.02 789.44 A25.4 25.4 0 0 1 1380.90 745.91" fill="none" stroke="#63676f" stroke-width="6"/><rect x="1365.50" y="740.55" width="13" height="8.5" fill="#a8abb4" transform="rotate(20.52 1372 769.7)"/><path d="M1320.6 804.1999999999999 H1334.0 L1327.3 811.5 Z" fill="#b0b3bc"/><path d="M1457.2500000000002 320.55 H1472.45 M1464.8500000000001 312.95 V328.15000000000003" stroke="#2f8ee0" stroke-width="2.8"/><path d="M1457.2500000000002 352.00000000000006 H1472.45" stroke="#2f8ee0" stroke-width="2.8"/><path d="M1676.05 379.29999999999995 H1689.45 L1682.75 386.59999999999997 Z" fill="#b0b3bc"/><circle cx="1748.5" cy="351.2" r="38.95" fill="none" stroke="#10141c" stroke-width="7.5"/><path d="M1723.99 381.47 A38.95 38.95 0 0 1 1770.29 318.92" fill="none" stroke="#2f8ee0" stroke-width="7.5"/><rect x="1739.50" y="307.25" width="18" height="11" fill="#a8abb4" transform="rotate(34.02 1748.5 351.2)"/><path d="M1457.4500000000003 512.95 H1472.65 M1465.0500000000002 505.35 V520.5500000000001" stroke="#7d8189" stroke-width="2.8"/><path d="M1457.4500000000003 546.7 H1472.65" stroke="#7d8189" stroke-width="2.8"/><circle cx="1743.8" cy="528" r="25.6" fill="none" stroke="#10141c" stroke-width="6"/><path d="M1727.69 547.89 A25.6 25.6 0 0 1 1743.80 502.40" fill="none" stroke="#63676f" stroke-width="6"/><rect x="1736.80" y="498.75" width="14" height="8.3" fill="#a8abb4" transform="rotate(0.00 1743.8 528)"/><path d="M1457.4500000000003 588.05 H1472.65 M1465.0500000000002 580.4499999999999 V595.65" stroke="#7d8189" stroke-width="2.8"/><path d="M1457.4500000000003 621.8 H1472.65" stroke="#7d8189" stroke-width="2.8"/><circle cx="1743.8" cy="603" r="25.6" fill="none" stroke="#10141c" stroke-width="6"/><path d="M1727.69 622.89 A25.6 25.6 0 0 1 1743.80 577.40" fill="none" stroke="#63676f" stroke-width="6"/><rect x="1736.80" y="573.75" width="14" height="8.3" fill="#a8abb4" transform="rotate(0.00 1743.8 603)"/><path d="M1457.4500000000003 663.15 H1472.65 M1465.0500000000002 655.55 V670.75" stroke="#7d8189" stroke-width="2.8"/><path d="M1457.4500000000003 696.8999999999999 H1472.65" stroke="#7d8189" stroke-width="2.8"/><circle cx="1671.3" cy="691.1" r="2.7" fill="none" stroke="#7d8189" stroke-width="1.5"/><circle cx="1743.8" cy="678.4" r="25.6" fill="none" stroke="#10141c" stroke-width="6"/><path d="M1727.69 698.29 A25.6 25.6 0 0 1 1720.15 668.60" fill="none" stroke="#63676f" stroke-width="6"/><rect x="1736.80" y="649.15" width="14" height="8.3" fill="#a8abb4" transform="rotate(-67.50 1743.8 678.4)"/><path d="M1457.4500000000003 737.45 H1472.65 M1465.0500000000002 729.85 V745.0500000000001" stroke="#7d8189" stroke-width="2.8"/><path d="M1457.4500000000003 769.45 H1472.65" stroke="#7d8189" stroke-width="2.8"/><circle cx="1770.2" cy="768.6" r="26.5" fill="none" stroke="#10141c" stroke-width="6"/><path d="M1753.52 789.19 A26.5 26.5 0 0 1 1779.49 743.78" fill="none" stroke="#63676f" stroke-width="6"/><rect x="1763.70" y="738.35" width="13" height="8.5" fill="#a8abb4" transform="rotate(20.52 1770.2 768.6)"/><path d="M1718.6499999999999 798.35 H1732.05 L1725.35 805.6500000000001 Z" fill="#b0b3bc"/></svg>
<div style="position:absolute;top:15px;font-size:17.4px;line-height:17.4px;color:#c9ccd3;font-weight:400;white-space:nowrap;letter-spacing:0.154px;left:5.61px;">PWM genarator</div><div style="position:absolute;top:67px;font-size:16.6px;line-height:16.6px;color:#8c9099;font-weight:400;white-space:nowrap;letter-spacing:-0.486px;right:1771.79px;text-align:right;">3.30</div><div style="position:absolute;top:158px;font-size:16.6px;line-height:16.6px;color:#8c9099;font-weight:400;white-space:nowrap;letter-spacing:-0.376px;right:1771.68px;text-align:right;">2.47</div><div style="position:absolute;top:249px;font-size:16.6px;line-height:16.6px;color:#8c9099;font-weight:400;white-space:nowrap;letter-spacing:-0.293px;right:1771.59px;text-align:right;">1.65</div><div style="position:absolute;top:340px;font-size:16.6px;line-height:16.6px;color:#8c9099;font-weight:400;white-space:nowrap;letter-spacing:-0.431px;right:1771.73px;text-align:right;">0.82</div><div style="position:absolute;top:430px;font-size:16.6px;line-height:16.6px;color:#8c9099;font-weight:400;white-space:nowrap;letter-spacing:-0.486px;right:1771.79px;text-align:right;">0.00</div><div style="position:absolute;top:449px;font-size:16.6px;line-height:16.6px;color:#8c9099;font-weight:400;white-space:nowrap;left:-238.70px;width:600px;text-align:center;">0</div><div style="position:absolute;top:449px;font-size:16.6px;line-height:16.6px;color:#8c9099;font-weight:400;white-space:nowrap;letter-spacing:-0.464px;left:-11.98px;width:600px;text-align:center;">0.00025</div><div style="position:absolute;top:449px;font-size:16.6px;line-height:16.6px;color:#8c9099;font-weight:400;white-space:nowrap;letter-spacing:-0.614px;left:215.19px;width:600px;text-align:center;">0.0005</div><div style="position:absolute;top:449px;font-size:16.6px;line-height:16.6px;color:#8c9099;font-weight:400;white-space:nowrap;letter-spacing:-0.464px;left:442.52px;width:600px;text-align:center;">0.00075</div><div style="position:absolute;top:449px;font-size:16.6px;line-height:16.6px;color:#8c9099;font-weight:400;white-space:nowrap;letter-spacing:-0.647px;left:669.68px;width:600px;text-align:center;">0.001</div><div style="position:absolute;top:503px;font-size:16.6px;line-height:16.6px;color:#8c9099;font-weight:400;white-space:nowrap;letter-spacing:-0.206px;right:1774.51px;text-align:right;">4.6</div><div style="position:absolute;top:593px;font-size:16.6px;line-height:16.6px;color:#8c9099;font-weight:400;white-space:nowrap;letter-spacing:-0.206px;right:1774.51px;text-align:right;">3.4</div><div style="position:absolute;top:684px;font-size:16.6px;line-height:16.6px;color:#8c9099;font-weight:400;white-space:nowrap;letter-spacing:0.001px;right:1774.30px;text-align:right;">2.1</div><div style="position:absolute;top:774px;font-size:16.6px;line-height:16.6px;color:#8c9099;font-weight:400;white-space:nowrap;letter-spacing:-0.082px;right:1774.38px;text-align:right;">0.9</div><div style="position:absolute;top:865px;font-size:16.6px;line-height:16.6px;color:#8c9099;font-weight:400;white-space:nowrap;letter-spacing:-0.019px;right:1774.32px;text-align:right;">-0.3</div><div style="position:absolute;top:884px;font-size:16.6px;line-height:16.6px;color:#8c9099;font-weight:400;white-space:nowrap;left:-240.70px;width:600px;text-align:center;">0</div><div style="position:absolute;top:884px;font-size:16.6px;line-height:16.6px;color:#8c9099;font-weight:400;white-space:nowrap;letter-spacing:-0.155px;left:-15.83px;width:600px;text-align:center;">1.8e+03</div><div style="position:absolute;top:884px;font-size:16.6px;line-height:16.6px;color:#8c9099;font-weight:400;white-space:nowrap;letter-spacing:-0.252px;left:209.37px;width:600px;text-align:center;">3.6e+03</div><div style="position:absolute;top:884px;font-size:16.6px;line-height:16.6px;color:#8c9099;font-weight:400;white-space:nowrap;letter-spacing:-0.252px;left:434.62px;width:600px;text-align:center;">5.4e+03</div><div style="position:absolute;top:884px;font-size:16.6px;line-height:16.6px;color:#8c9099;font-weight:400;white-space:nowrap;letter-spacing:-0.225px;left:659.89px;width:600px;text-align:center;">7.2e+03</div><div style="position:absolute;top:55px;font-size:17.3px;line-height:17.3px;color:#8f939c;font-weight:400;white-space:nowrap;letter-spacing:0.328px;left:1023.13px;">Common</div><div style="position:absolute;top:86px;font-size:18.8px;line-height:18.8px;color:#f69c1b;font-weight:700;white-space:nowrap;letter-spacing:0.592px;left:1120.80px;width:600px;text-align:center;">Uploading 60%</div><div style="position:absolute;top:120px;font-size:17.3px;line-height:17.3px;color:#c9ccd3;font-weight:400;white-space:nowrap;letter-spacing:0.344px;left:1030.62px;">Memory</div><div style="position:absolute;top:153px;font-size:17.3px;line-height:17.3px;color:#c9ccd3;font-weight:400;white-space:nowrap;letter-spacing:0.333px;left:1030.62px;">Number of channels</div><div style="position:absolute;top:186px;font-size:17.3px;line-height:17.3px;color:#c9ccd3;font-weight:400;white-space:nowrap;letter-spacing:-0.154px;left:1031.22px;">SW sweep CH1</div><div style="position:absolute;top:119px;font-size:18.5px;line-height:18.5px;color:#676b76;font-weight:700;white-space:nowrap;left:1299.50px;width:600px;text-align:center;">Best fit</div><div style="position:absolute;top:119px;font-size:18.5px;line-height:18.5px;color:#676b76;font-weight:700;white-space:nowrap;left:1382.00px;width:600px;text-align:center;">Long</div><div style="position:absolute;top:119px;font-size:18.5px;line-height:18.5px;color:#676b76;font-weight:700;white-space:nowrap;left:1466.00px;width:600px;text-align:center;">Custom</div><div style="position:absolute;top:152px;font-size:18.5px;line-height:18.5px;color:#676b76;font-weight:700;white-space:nowrap;left:1384.00px;width:600px;text-align:center;">One</div><div style="position:absolute;top:152px;font-size:18.5px;line-height:18.5px;color:#676b76;font-weight:700;white-space:nowrap;left:1470.50px;width:600px;text-align:center;">Two</div><div style="position:absolute;top:185px;font-size:18.5px;line-height:18.5px;color:#1e2436;font-weight:700;white-space:nowrap;left:1402.15px;width:600px;text-align:center;">Off</div><div style="position:absolute;top:185px;font-size:18.5px;line-height:18.5px;color:#e2e5ea;font-weight:700;white-space:nowrap;left:1477.00px;width:600px;text-align:center;">On</div><div style="position:absolute;top:234px;font-size:17.3px;line-height:17.3px;color:#8f939c;font-weight:400;white-space:nowrap;letter-spacing:0.451px;left:1036.63px;">Channel 1 | pin D8</div><div style="position:absolute;top:271px;font-size:18.5px;line-height:18.5px;color:#676b76;font-weight:700;white-space:nowrap;left:786.30px;width:600px;text-align:center;">Sine</div><div style="position:absolute;top:271px;font-size:18.5px;line-height:18.5px;color:#676b76;font-weight:700;white-space:nowrap;left:876.15px;width:600px;text-align:center;">Saw</div><div style="position:absolute;top:271px;font-size:18.5px;line-height:18.5px;color:#676b76;font-weight:700;white-space:nowrap;left:966.05px;width:600px;text-align:center;">Rect</div><div style="position:absolute;top:271px;font-size:18.5px;line-height:18.5px;color:#676b76;font-weight:700;white-space:nowrap;left:1056.30px;width:600px;text-align:center;">Arb</div><div style="position:absolute;top:311px;font-size:17.3px;line-height:17.3px;color:#c9ccd3;font-weight:400;white-space:nowrap;letter-spacing:0.091px;left:1098.22px;">Frequency</div><div style="position:absolute;top:311px;font-size:17.3px;line-height:17.3px;color:#8e929c;font-weight:400;white-space:nowrap;letter-spacing:0.258px;left:1184.70px;">1.0000 kHz</div><div style="position:absolute;top:346px;font-size:23.5px;line-height:23.5px;color:#c9ccd3;font-weight:400;white-space:nowrap;transform:scaleX(0.9673);transform-origin:0 0;left:1117.10px;">1.00</div><div style="position:absolute;top:349px;font-size:16.5px;line-height:16.5px;color:#c9ccd3;font-weight:400;white-space:nowrap;letter-spacing:1.009px;left:1257.43px;">kHz</div><div style="position:absolute;top:390px;font-size:17.3px;line-height:17.3px;color:#c9ccd3;font-weight:400;white-space:nowrap;letter-spacing:0.567px;left:1046.88px;">kHz</div><div style="position:absolute;top:432px;font-size:17.3px;line-height:17.3px;color:#c9ccd3;font-weight:400;white-space:nowrap;letter-spacing:0.599px;left:1043.92px;">Data length:</div><div style="position:absolute;top:428px;font-size:17.3px;line-height:17.3px;color:#c9ccd3;font-weight:400;white-space:nowrap;letter-spacing:0.216px;left:1150.84px;">2400 samples</div><div style="position:absolute;top:470px;font-size:17.3px;line-height:17.3px;color:#7d8189;font-weight:400;white-space:nowrap;letter-spacing:0.381px;left:1098.42px;">Offset</div><div style="position:absolute;top:505px;font-size:23.5px;line-height:23.5px;color:#858992;font-weight:400;white-space:nowrap;transform:scaleX(0.9743);transform-origin:0 0;left:1116.58px;">1.65</div><div style="position:absolute;top:508px;font-size:16.5px;line-height:16.5px;color:#7d8189;font-weight:400;white-space:nowrap;left:1266.60px;">V</div><div style="position:absolute;top:554px;font-size:17.3px;line-height:17.3px;color:#7d8189;font-weight:400;white-space:nowrap;letter-spacing:0.396px;left:1099.11px;">Amplitude</div><div style="position:absolute;top:589px;font-size:23.5px;line-height:23.5px;color:#858992;font-weight:400;white-space:nowrap;transform:scaleX(0.9743);transform-origin:0 0;left:1116.58px;">1.65</div><div style="position:absolute;top:592px;font-size:16.5px;line-height:16.5px;color:#7d8189;font-weight:400;white-space:nowrap;left:1266.60px;">V</div><div style="position:absolute;top:638px;font-size:17.3px;line-height:17.3px;color:#7d8189;font-weight:400;white-space:nowrap;letter-spacing:-0.296px;left:1097.82px;">Phase</div><div style="position:absolute;top:673px;font-size:23.5px;line-height:23.5px;color:#858992;font-weight:400;white-space:nowrap;transform:scaleX(0.9651);transform-origin:0 0;left:1117.39px;">0.00</div><div style="position:absolute;top:722px;font-size:17.3px;line-height:17.3px;color:#7d8189;font-weight:400;white-space:nowrap;letter-spacing:0.014px;left:1097.82px;">PWM Frequency</div><div style="position:absolute;top:722px;font-size:17.3px;line-height:17.3px;color:#898d96;font-weight:400;white-space:nowrap;letter-spacing:0.202px;left:1231.70px;">10.0000 kHz</div><div style="position:absolute;top:757px;font-size:23.5px;line-height:23.5px;color:#858992;font-weight:400;white-space:nowrap;transform:scaleX(0.9849);transform-origin:0 0;left:1116.56px;">10.00</div><div style="position:absolute;top:759px;font-size:16.5px;line-height:16.5px;color:#7d8189;font-weight:400;white-space:nowrap;left:1301.50px;">kHz</div><div style="position:absolute;top:801px;font-size:17.3px;line-height:17.3px;color:#7d8189;font-weight:400;white-space:nowrap;letter-spacing:0.567px;left:1046.88px;">kHz</div><div style="position:absolute;top:843px;font-size:17.3px;line-height:17.3px;color:#c9ccd3;font-weight:400;white-space:nowrap;letter-spacing:0.135px;left:1043.82px;">PWM Resolution:</div><div style="position:absolute;top:839px;font-size:17.3px;line-height:17.3px;color:#c9ccd3;font-weight:400;white-space:nowrap;letter-spacing:0.301px;left:1187.60px;">12.8 Bits</div><div style="position:absolute;top:234px;font-size:17.3px;line-height:17.3px;color:#8f939c;font-weight:400;white-space:nowrap;letter-spacing:0.428px;left:1434.23px;">Channel 2 | pin D5</div><div style="position:absolute;top:271px;font-size:18.5px;line-height:18.5px;color:#676b76;font-weight:700;white-space:nowrap;left:1183.95px;width:600px;text-align:center;">Sine</div><div style="position:absolute;top:271px;font-size:18.5px;line-height:18.5px;color:#676b76;font-weight:700;white-space:nowrap;left:1274.60px;width:600px;text-align:center;">Saw</div><div style="position:absolute;top:271px;font-size:18.5px;line-height:18.5px;color:#676b76;font-weight:700;white-space:nowrap;left:1365.10px;width:600px;text-align:center;">Rect</div><div style="position:absolute;top:271px;font-size:18.5px;line-height:18.5px;color:#676b76;font-weight:700;white-space:nowrap;left:1455.15px;width:600px;text-align:center;">Arb</div><div style="position:absolute;top:311px;font-size:17.3px;line-height:17.3px;color:#c9ccd3;font-weight:400;white-space:nowrap;letter-spacing:0.091px;left:1495.52px;">Frequency</div><div style="position:absolute;top:311px;font-size:17.3px;line-height:17.3px;color:#8e929c;font-weight:400;white-space:nowrap;letter-spacing:0.258px;left:1582.00px;">1.0000 kHz</div><div style="position:absolute;top:340px;font-size:23.5px;line-height:23.5px;color:#c9ccd3;font-weight:400;white-space:nowrap;transform:scaleX(0.9673);transform-origin:0 0;left:1514.50px;">1.00</div><div style="position:absolute;top:342px;font-size:16.5px;line-height:16.5px;color:#c9ccd3;font-weight:400;white-space:nowrap;letter-spacing:0.809px;left:1656.33px;">kHz</div><div style="position:absolute;top:376px;font-size:17.3px;line-height:17.3px;color:#c9ccd3;font-weight:400;white-space:nowrap;letter-spacing:0.567px;left:1445.08px;">kHz</div><div style="position:absolute;top:421px;font-size:17.3px;line-height:17.3px;color:#c9ccd3;font-weight:400;white-space:nowrap;letter-spacing:0.001px;left:1442.34px;">CH1 Freq sync</div><div style="position:absolute;top:419px;font-size:18.5px;line-height:18.5px;color:#1e2436;font-weight:700;white-space:nowrap;left:1322.85px;width:600px;text-align:center;">Off</div><div style="position:absolute;top:419px;font-size:18.5px;line-height:18.5px;color:#3598ec;font-weight:700;white-space:nowrap;left:1440.40px;width:600px;text-align:center;">On</div><div style="position:absolute;top:465px;font-size:17.3px;line-height:17.3px;color:#c9ccd3;font-weight:400;white-space:nowrap;letter-spacing:0.599px;left:1441.82px;">Data length:</div><div style="position:absolute;top:461px;font-size:17.3px;line-height:17.3px;color:#c9ccd3;font-weight:400;white-space:nowrap;letter-spacing:0.216px;left:1548.84px;">2400 samples</div><div style="position:absolute;top:502px;font-size:17.3px;line-height:17.3px;color:#7d8189;font-weight:400;white-space:nowrap;letter-spacing:0.381px;left:1496.02px;">Offset</div><div style="position:absolute;top:534px;font-size:23.5px;line-height:23.5px;color:#858992;font-weight:400;white-space:nowrap;transform:scaleX(0.9743);transform-origin:0 0;left:1514.88px;">1.65</div><div style="position:absolute;top:536px;font-size:16.5px;line-height:16.5px;color:#7d8189;font-weight:400;white-space:nowrap;left:1666.10px;">V</div><div style="position:absolute;top:578px;font-size:17.3px;line-height:17.3px;color:#7d8189;font-weight:400;white-space:nowrap;letter-spacing:0.396px;left:1496.71px;">Amplitude</div><div style="position:absolute;top:609px;font-size:23.5px;line-height:23.5px;color:#858992;font-weight:400;white-space:nowrap;transform:scaleX(0.9743);transform-origin:0 0;left:1514.88px;">1.65</div><div style="position:absolute;top:611px;font-size:16.5px;line-height:16.5px;color:#7d8189;font-weight:400;white-space:nowrap;left:1666.10px;">V</div><div style="position:absolute;top:653px;font-size:17.3px;line-height:17.3px;color:#7d8189;font-weight:400;white-space:nowrap;letter-spacing:-0.296px;left:1495.42px;">Phase</div><div style="position:absolute;top:684px;font-size:23.5px;line-height:23.5px;color:#858992;font-weight:400;white-space:nowrap;transform:scaleX(0.9656);transform-origin:0 0;left:1515.58px;">90.00</div><div style="position:absolute;top:728px;font-size:17.3px;line-height:17.3px;color:#7d8189;font-weight:400;white-space:nowrap;letter-spacing:0.014px;left:1495.62px;">PWM Frequency</div><div style="position:absolute;top:728px;font-size:17.3px;line-height:17.3px;color:#898d96;font-weight:400;white-space:nowrap;letter-spacing:0.202px;left:1629.40px;">10.0000 kHz</div><div style="position:absolute;top:757px;font-size:23.5px;line-height:23.5px;color:#858992;font-weight:400;white-space:nowrap;transform:scaleX(0.9849);transform-origin:0 0;left:1514.76px;">10.00</div><div style="position:absolute;top:759px;font-size:16.5px;line-height:16.5px;color:#7d8189;font-weight:400;white-space:nowrap;left:1699.50px;">kHz</div><div style="position:absolute;top:795px;font-size:17.3px;line-height:17.3px;color:#7d8189;font-weight:400;white-space:nowrap;letter-spacing:0.567px;left:1444.88px;">kHz</div><div style="position:absolute;top:840px;font-size:17.3px;line-height:17.3px;color:#c9ccd3;font-weight:400;white-space:nowrap;letter-spacing:-0.132px;left:1441.93px;">CH1 PWM sync</div><div style="position:absolute;top:838px;font-size:18.5px;line-height:18.5px;color:#1e2436;font-weight:700;white-space:nowrap;left:1325.50px;width:600px;text-align:center;">Off</div><div style="position:absolute;top:838px;font-size:18.5px;line-height:18.5px;color:#3598ec;font-weight:700;white-space:nowrap;left:1441.20px;width:600px;text-align:center;">On</div><div style="position:absolute;top:883px;font-size:17.3px;line-height:17.3px;color:#c9ccd3;font-weight:400;white-space:nowrap;letter-spacing:0.135px;left:1441.62px;">PWM Resolution:</div><div style="position:absolute;top:879px;font-size:17.3px;line-height:17.3px;color:#c9ccd3;font-weight:400;white-space:nowrap;letter-spacing:0.313px;left:1585.00px;">12.8 Bits</div>
</body></html>
